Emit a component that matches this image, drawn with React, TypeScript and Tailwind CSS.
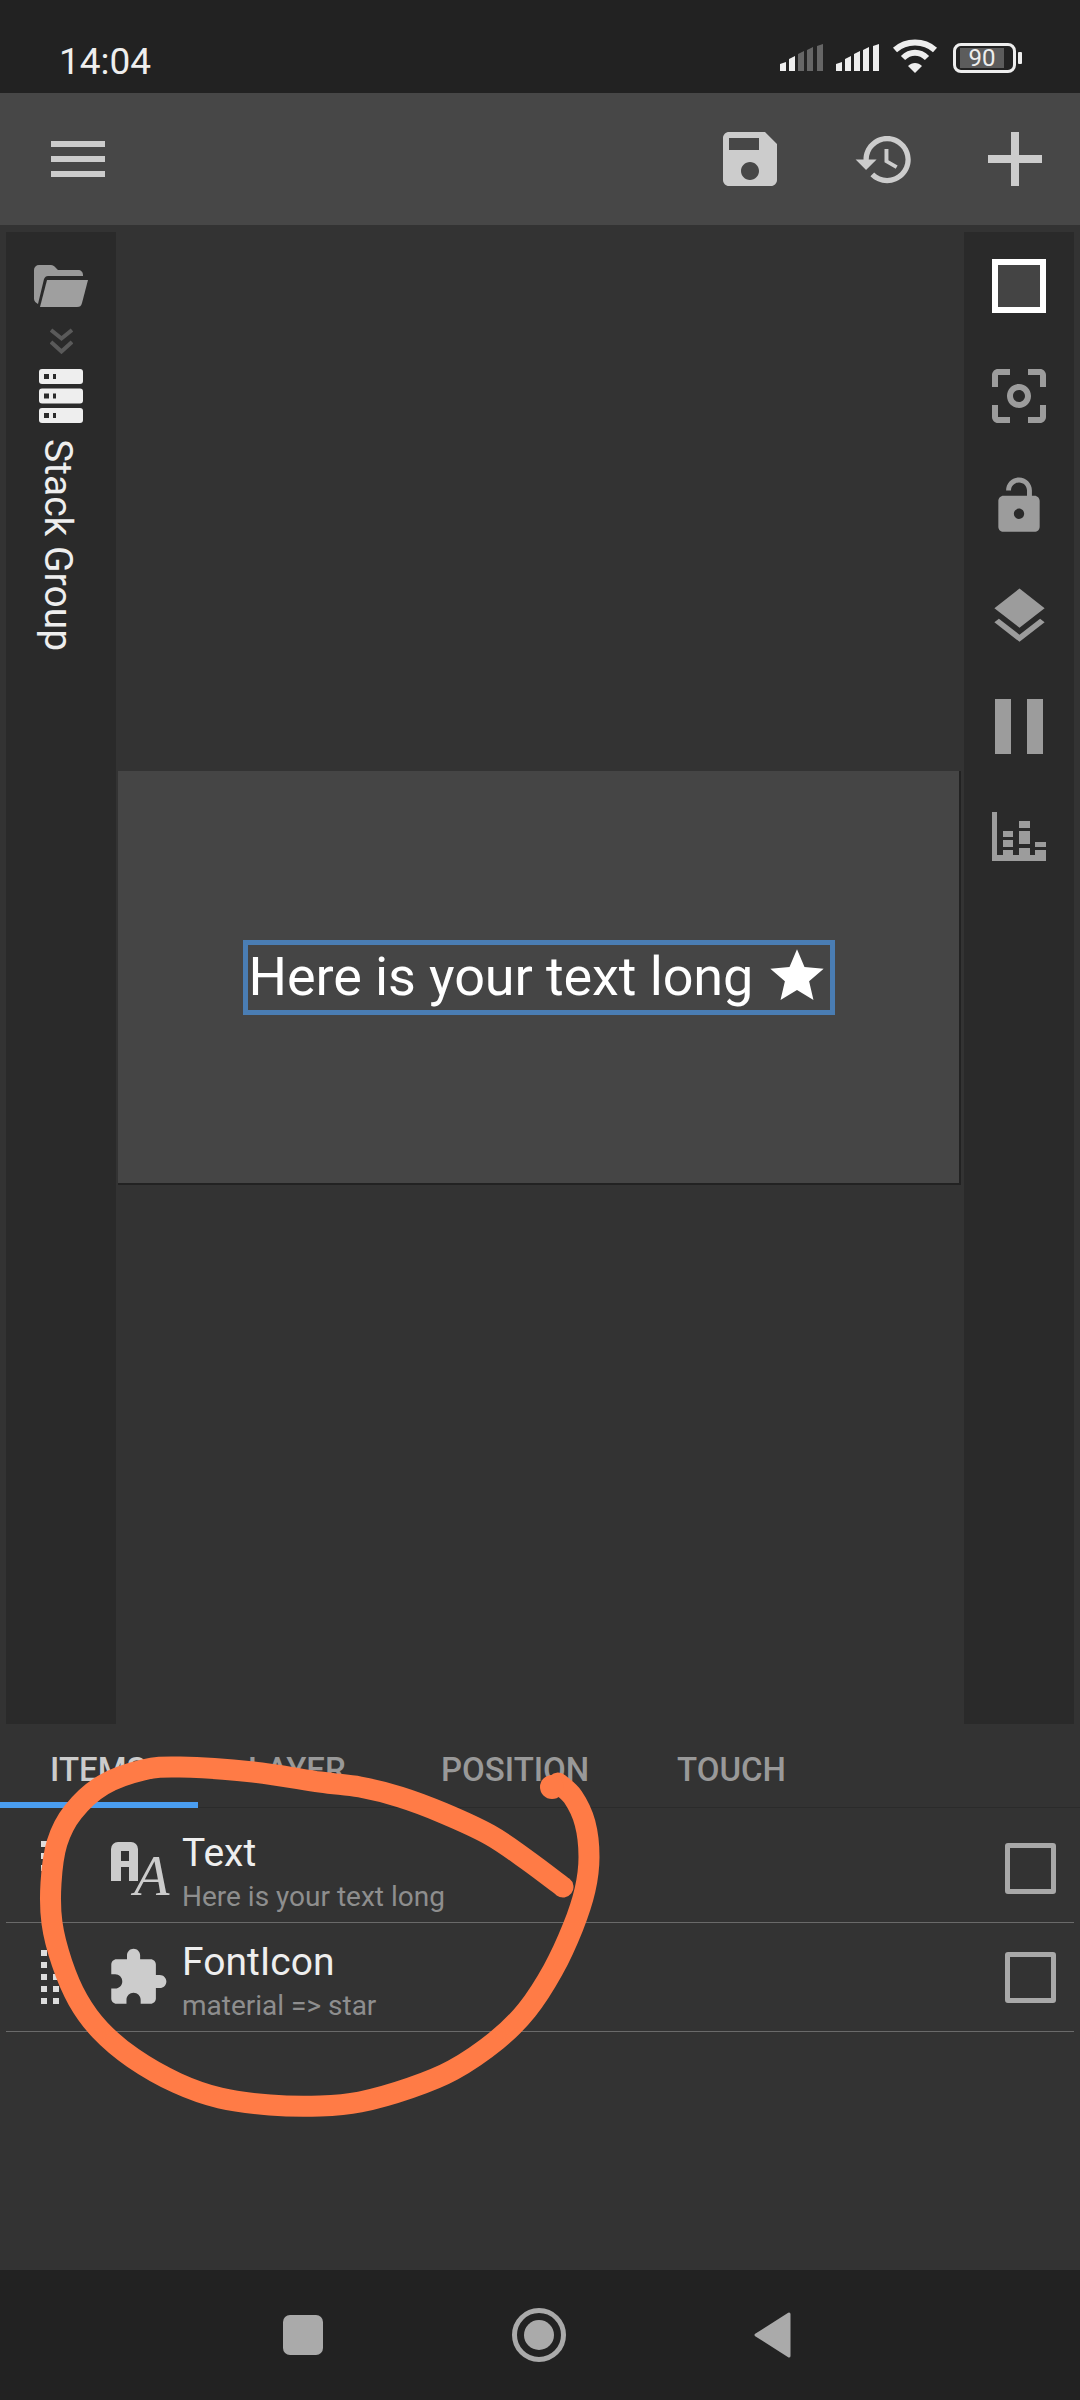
const scribble: [number, number][] = [
  [563, 1887], [527, 1860], [490, 1835], [443, 1813], [400, 1797], [360, 1787], [320, 1782], [253, 1772],
  [180, 1767], [143, 1770], [103, 1785], [73, 1812], [57, 1843], [51, 1883], [52, 1923], [62, 1963],
  [78, 2000], [100, 2030], [133, 2058], [177, 2083], [220, 2098], [270, 2105], [320, 2106], [360, 2102],
  [410, 2088], [453, 2070], [497, 2040], [527, 2010], [553, 1970], [573, 1927], [585, 1890], [589, 1857],
  [585, 1823], [573, 1797], [558, 1783],
];

// catmull-rom through the points
const smooth = (pts: [number, number][]) => {
  let d = `M${pts[0][0]} ${pts[0][1]}`;
  for (let i = 0; i < pts.length - 1; i++) {
    const p0 = pts[Math.max(i - 1, 0)];
    const p1 = pts[i];
    const p2 = pts[i + 1];
    const p3 = pts[Math.min(i + 2, pts.length - 1)];
    const c1x = p1[0] + (p2[0] - p0[0]) / 6;
    const c1y = p1[1] + (p2[1] - p0[1]) / 6;
    const c2x = p2[0] - (p3[0] - p1[0]) / 6;
    const c2y = p2[1] - (p3[1] - p1[1]) / 6;
    d += ` C${c1x} ${c1y} ${c2x} ${c2y} ${p2[0]} ${p2[1]}`;
  }
  return d;
};

const Icon = ({ d, size = 72, className = "" }: { d: string; size?: number; className?: string }) => (
  <svg width={size} height={size} viewBox="0 0 24 24" fill="currentColor" className={className}>
    <path d={d} />
  </svg>
);

const Signal = ({ dim }: { dim?: boolean }) => (
  <svg width="44" height="28" viewBox="0 0 44 28">
    <path d="M0 20l6-2v9H0z M9 15l6-3v15H9z" fill="#eee" />
    <path d="M18 10l6-3v20h-6z M27 6l6-3v24h-6z M37 2l6-2v27h-6z" fill={dim ? "#666" : "#eee"} />
  </svg>
);

const Handle = () => (
  <div className="grid grid-cols-2 gap-x-[6px] gap-y-[6px] w-[18px] shrink-0">
    {Array.from({ length: 10 }).map((_, i) => (
      <div key={i} className="w-[6px] h-[6px] bg-[#ddd]" />
    ))}
  </div>
);

const Row = ({ icon, title, sub }: { icon: React.ReactNode; title: string; sub: string }) => (
  <div className="h-[109px] border-b border-[#6a6a6a] flex items-center pl-[35px] pr-[18px]">
    <Handle />
    <div className="w-[72px] h-[72px] ml-[42px] flex items-center justify-center text-[#ccc] shrink-0">{icon}</div>
    <div className="ml-[9px] flex-1 mt-[8px]">
      <div className="text-[39px] leading-[46px] text-[#eee]">{title}</div>
      <div className="text-[28px] leading-[36px] text-[#8e8e8e] mt-[3px]">{sub}</div>
    </div>
    <div className="w-[51px] h-[51px] border-[5px] border-[#a8a8a8] rounded-[3px]" />
  </div>
);

export default function App() {
  return (
    <div className="relative w-[1080px] h-[2400px] bg-[#333] flex flex-col overflow-hidden font-['Roboto',sans-serif]">
      {/* status bar */}
      <div className="h-[93px] bg-[#222] flex items-start shrink-0 pl-[59px] pr-[58px] pt-[40px]">
        <span className="text-[37px] leading-[44px] text-[#eee]">14:04</span>
        <div className="ml-auto flex items-center gap-[12px] mt-[3px]">
          <Signal dim />
          <Signal />
          <svg width="46" height="34" viewBox="0 0 46 34" className="-mt-[4px]">
            <path d="M3 11C14 1 32 1 43 11" fill="none" stroke="#eee" strokeWidth="6" />
            <path d="M11 19C18 12 28 12 35 19" fill="none" stroke="#eee" strokeWidth="6" />
            <path d="M23 34l-7-7c4-4 10-4 14 0z" fill="#eee" />
          </svg>
          <div className="flex items-center ml-[3px]">
            <div className="w-[63px] h-[30px] border-[3px] border-[#eee] rounded-[8px] flex items-center pl-[4px]">
              <div className="w-[44px] h-[20px] bg-[#5c5c5c] flex items-center justify-center text-[24px] leading-none text-[#eee]">90</div>
            </div>
            <div className="w-[4px] h-[12px] bg-[#eee] ml-[2px] rounded-[1px]" />
          </div>
        </div>
      </div>

      {/* toolbar */}
      <div className="h-[132px] bg-[#474747] flex items-center shrink-0 pl-[42px] pr-[38px] text-[#ccc]">
        <Icon d="M3 18h18v-2H3v2zm0-5h18v-2H3v2zm0-7v2h18V6H3z" />
        <Icon className="ml-auto" d="M17 3H5c-1.11 0-2 .9-2 2v14c0 1.1.89 2 2 2h14c1.1 0 2-.9 2-2V7l-4-4zm-5 16c-1.66 0-3-1.34-3-3s1.34-3 3-3 3 1.34 3 3-1.34 3-3 3zm3-10H5V5h10v4z" />
        <Icon size={63} className="ml-[67px]" d="M13 3c-4.97 0-9 4.03-9 9H1l3.89 3.89.07.14L9 12H6c0-3.87 3.13-7 7-7s7 3.13 7 7-3.13 7-7 7c-1.93 0-3.68-.79-4.94-2.06l-1.42 1.42C8.27 19.99 10.51 21 13 21c4.97 0 9-4.03 9-9s-4.03-9-9-9zm-1 5v5l4.28 2.54.72-1.21-3.5-2.08V8H12z" />
        <svg width="54" height="54" viewBox="0 0 54 54" fill="currentColor" className="ml-[72px]">
          <path d="M23 0h8v23h23v8H31v23h-8V31H0v-8h23z" />
        </svg>
      </div>

      {/* stage */}
      <div className="h-[1499px] shrink-0 flex pt-[7px] pl-[6px] pr-[6px]">
        <div className="w-[110px] h-[1492px] bg-[#2a2a2a] flex flex-col items-center pt-[33px]">
          <svg width="54" height="42" viewBox="0 0 54 42">
            <path d="M0 5a5 5 0 0 1 5-5h12c2 0 3 1 4 2l3 3h20c3 0 5 2 5 5v1H14c-2 0-3 1-4 3L4 39c-2-1-4-3-4-5z" fill="#999" />
            <path d="M13 15h41l-6 23c-1 3-2 4-5 4H6z" fill="#9f9f9f" />
          </svg>
          <svg width="23" height="26" viewBox="0 0 23 26" className="mt-[21px]" fill="none" stroke="#5a5a5a" strokeWidth="4">
            <path d="M1 2l10.500 8.500L22 2M1 14l10.500 9.500L22 14" />
          </svg>
          <svg width="44" height="54" viewBox="0 0 44 54" className="mt-[15px]">
            {[0, 19.500, 39].map((y) => (
              <g key={y}>
                <rect y={y} width="44" height="15" rx="3" fill="#eee" />
                <rect x="5" y={y + 5} width="5" height="5" fill="#2a2a2a" />
                <rect x="14" y={y + 5} width="3" height="5" fill="#2a2a2a" />
              </g>
            ))}
          </svg>
          <div className="mt-[16px] -ml-[6px] [writing-mode:vertical-rl] text-[39px] leading-[46px] text-[#eee]">Stack Group</div>
        </div>

        <div className="flex-1 flex items-center h-[1492px] pl-[2px] pr-[3px]">
          <div className="w-full h-[414px] bg-[#454545] border-r-2 border-b-2 border-[#222] flex items-center justify-center">
            <div className="w-[592px] h-[75px] border-[5px] border-[#4a7db3] flex items-center pl-[1px]">
              <span className="text-[54px] leading-none tracking-[-0.1px] text-white whitespace-nowrap">Here is your text long</span>
              <svg width="64" height="64" viewBox="0 0 24 24" fill="#fff" className="ml-[12px] -mt-[2px] shrink-0">
                <path d="M12 17.270L18.180 21l-1.640-7.030L22 9.240l-7.190-.610L12 2 9.190 8.630 2 9.240l5.460 4.730L5.820 21z" />
              </svg>
            </div>
          </div>
        </div>

        <div className="w-[110px] h-[1492px] bg-[#2a2a2a] flex flex-col items-center pt-[18px] text-[#9c9c9c]">
          <div className="h-[72px] flex items-center">
            <div className="w-[54px] h-[54px] border-[6px] border-white bg-[#444]" />
          </div>
          <div className="h-[72px] mt-[38px] flex items-center">
            <Icon d="M5 15H3v4c0 1.100.9 2 2 2h4v-2H5v-4zM5 5h4V3H5c-1.100 0-2 .9-2 2v4h2V5zm14-2h-4v2h4v4h2V5c0-1.100-.9-2-2-2zm0 16h-4v2h4c1.100 0 2-.9 2-2v-4h-2v4zM12 8c-2.210 0-4 1.790-4 4s1.790 4 4 4 4-1.790 4-4-1.790-4-4-4zm0 6c-1.100 0-2-.9-2-2s.9-2 2-2 2 .9 2 2-.9 2-2 2z" />
          </div>
          <div className="h-[72px] mt-[38px] flex items-center">
            <Icon size={62} d="M18 8h-1V6c0-2.760-2.240-5-5-5S7 3.240 7 6h1.900c0-1.710 1.390-3.100 3.100-3.100 1.710 0 3.100 1.390 3.100 3.100v2H6c-1.100 0-2 .9-2 2v10c0 1.100.9 2 2 2h12c1.100 0 2-.9 2-2V10c0-1.100-.9-2-2-2zm-6 9c-1.100 0-2-.9-2-2s.9-2 2-2 2 .9 2 2-.9 2-2 2z" />
          </div>
          <div className="h-[72px] mt-[38px] flex items-center">
            <Icon size={67} d="M11.990 18.540l-7.370-5.730L3 14.070l9 7 9-7-1.630-1.270-7.380 5.740zM12 16l7.360-5.730L21 9l-9-7-9 7 1.630 1.270L12 16z" />
          </div>
          <div className="h-[72px] mt-[38px] flex items-center gap-[16px]">
            <div className="w-[16px] h-[55px] bg-[#9c9c9c]" />
            <div className="w-[16px] h-[55px] bg-[#9c9c9c]" />
          </div>
          <div className="h-[72px] mt-[38px] flex items-center">
            <svg width="54" height="49" viewBox="0 0 54 49" fill="currentColor">
              <path d="M0 0h5v43h49v6H0z" />
              <path d="M11 19h10v6H11zM11 28h10v7H11zM11 38h10v5H11zM27 9h11v7H27zM27 19h11v13H27zM27 36h11v7H27zM43 30h11v5H43zM43 38h11v5H43z" />
            </svg>
          </div>
        </div>
      </div>

      {/* tabs */}
      <div className="h-[84px] shrink-0 flex border-b border-[#2b2b2b] text-[33px] font-medium text-[#999]">
        <div className="relative w-[198px] pl-[50px] pt-[8px] flex items-center text-[#ccc] -mb-[1px]">
          ITEMS
          <div className="absolute left-0 right-0 bottom-0 h-[6px] bg-[#4a9df0]" />
        </div>
        <div className="ml-[50px] w-[193px] pt-[8px] flex items-center">LAYER</div>
        <div className="w-[236px] pt-[8px] flex items-center">POSITION</div>
        <div className="pt-[8px] flex items-center">TOUCH</div>
      </div>

      {/* item list */}
      <div className="mx-[6px] pt-[6px]">
        <Row
          title="Text"
          sub="Here is your text long"
          icon={
            <div className="relative w-[56px] h-[54px] text-[#ccc]">
              {/* block A is css shapes, the thin one is a real glyph */}
              <div className="absolute left-[2px] top-[1px] w-[27px] h-[39px] bg-[#ccc] rounded-t-[7px]">
                <div className="absolute left-[10px] top-[9px] w-[8px] h-[10px] bg-[#333]" />
                <div className="absolute left-[10px] top-[25px] w-[8px] h-[14px] bg-[#333]" />
              </div>
              <span className="absolute left-[25px] top-[13px] font-['Liberation_Serif',serif] italic text-[58px] leading-[44px]">A</span>
            </div>
          }
        />
        <Row
          title="FontIcon"
          sub="material => star"
          icon={
            <Icon size={63} d="M20.500 11H19V7c0-1.100-.9-2-2-2h-4V3.500C13 2.120 11.880 1 10.500 1S8 2.120 8 3.500V5H4c-1.100 0-1.990.9-1.990 2v3.800H3.500c1.490 0 2.700 1.210 2.700 2.700s-1.210 2.700-2.700 2.700H2V20c0 1.100.9 2 2 2h3.800v-1.500c0-1.490 1.210-2.700 2.700-2.700 1.490 0 2.700 1.210 2.700 2.700V22H17c1.100 0 2-.9 2-2v-4h1.500c1.380 0 2.500-1.120 2.500-2.500S21.880 11 20.500 11z" />
          }
        />
      </div>

      {/* nav bar */}
      <div className="absolute left-0 right-0 bottom-0 h-[130px] bg-[#222]">
        <div className="absolute left-[283px] top-[45px] w-[40px] h-[40px] rounded-[7px] bg-[#aaa]" />
        <div className="absolute left-[512px] top-[38px] w-[54px] h-[54px] rounded-full border-[5px] border-[#aaa] flex items-center justify-center">
          <div className="w-[30px] h-[30px] rounded-full bg-[#aaa]" />
        </div>
        <svg width="38" height="46" viewBox="0 0 38 46" className="absolute left-[754px] top-[42px]">
          <path d="M35 2v42L2 23z" fill="#aaa" stroke="#aaa" strokeWidth="3" strokeLinejoin="round" />
        </svg>
      </div>

      {/* hand drawn annotation */}
      <svg width="1080" height="2400" viewBox="0 0 1080 2400" className="absolute left-0 top-0 pointer-events-none">
        <path d={smooth(scribble)} fill="none" stroke="#ff7b46" strokeWidth="21" strokeLinecap="round" strokeLinejoin="round" />
        <circle cx="552" cy="1787" r="12" fill="#ff7b46" />
      </svg>
    </div>
  );
}
